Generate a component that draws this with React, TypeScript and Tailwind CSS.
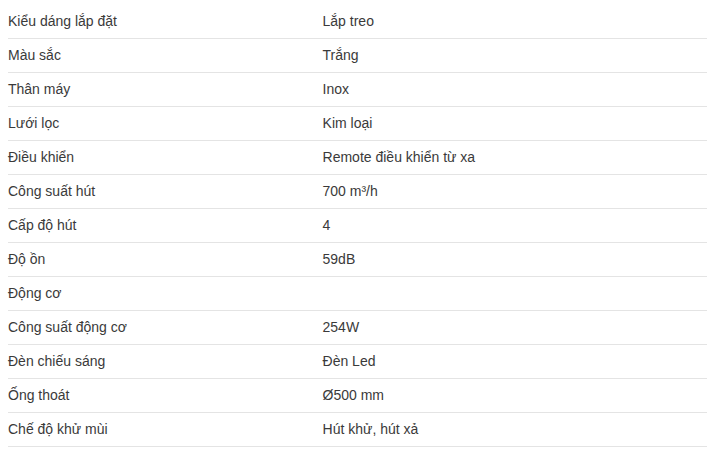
import React from "react";

const specs: [string, string][] = [
  ["Kiểu dáng lắp đặt", "Lắp treo"],
  ["Màu sắc", "Trắng"],
  ["Thân máy", "Inox"],
  ["Lưới lọc", "Kim loại"],
  ["Điều khiển", "Remote điều khiển từ xa"],
  ["Công suất hút", "700 m³/h"],
  ["Cấp độ hút", "4"],
  ["Độ ồn", "59dB"],
  ["Động cơ", ""],
  ["Công suất động cơ", "254W"],
  ["Đèn chiếu sáng", "Đèn Led"],
  ["Ống thoát", "Ø500 mm"],
  ["Chế độ khử mùi", "Hút khử, hút xả"],
];

const App = () => {
  return (
    <div className="bg-white w-[716px] h-[450px] px-2 pt-[5px] font-['Liberation_Sans',Arial,sans-serif] text-[14px] text-[#3a3a3a]">
      <table className="w-[699px] border-collapse">
        <tbody>
          {specs.map(([label, value]) => (
            <tr key={label} className="border-b border-[#e4e4e4]">
              <td className="w-[45%] py-[7px] leading-[19px]">{label}</td>
              <td className="py-[7px] leading-[19px]">{value}</td>
            </tr>
          ))}
        </tbody>
      </table>
    </div>
  );
};

export default App;
